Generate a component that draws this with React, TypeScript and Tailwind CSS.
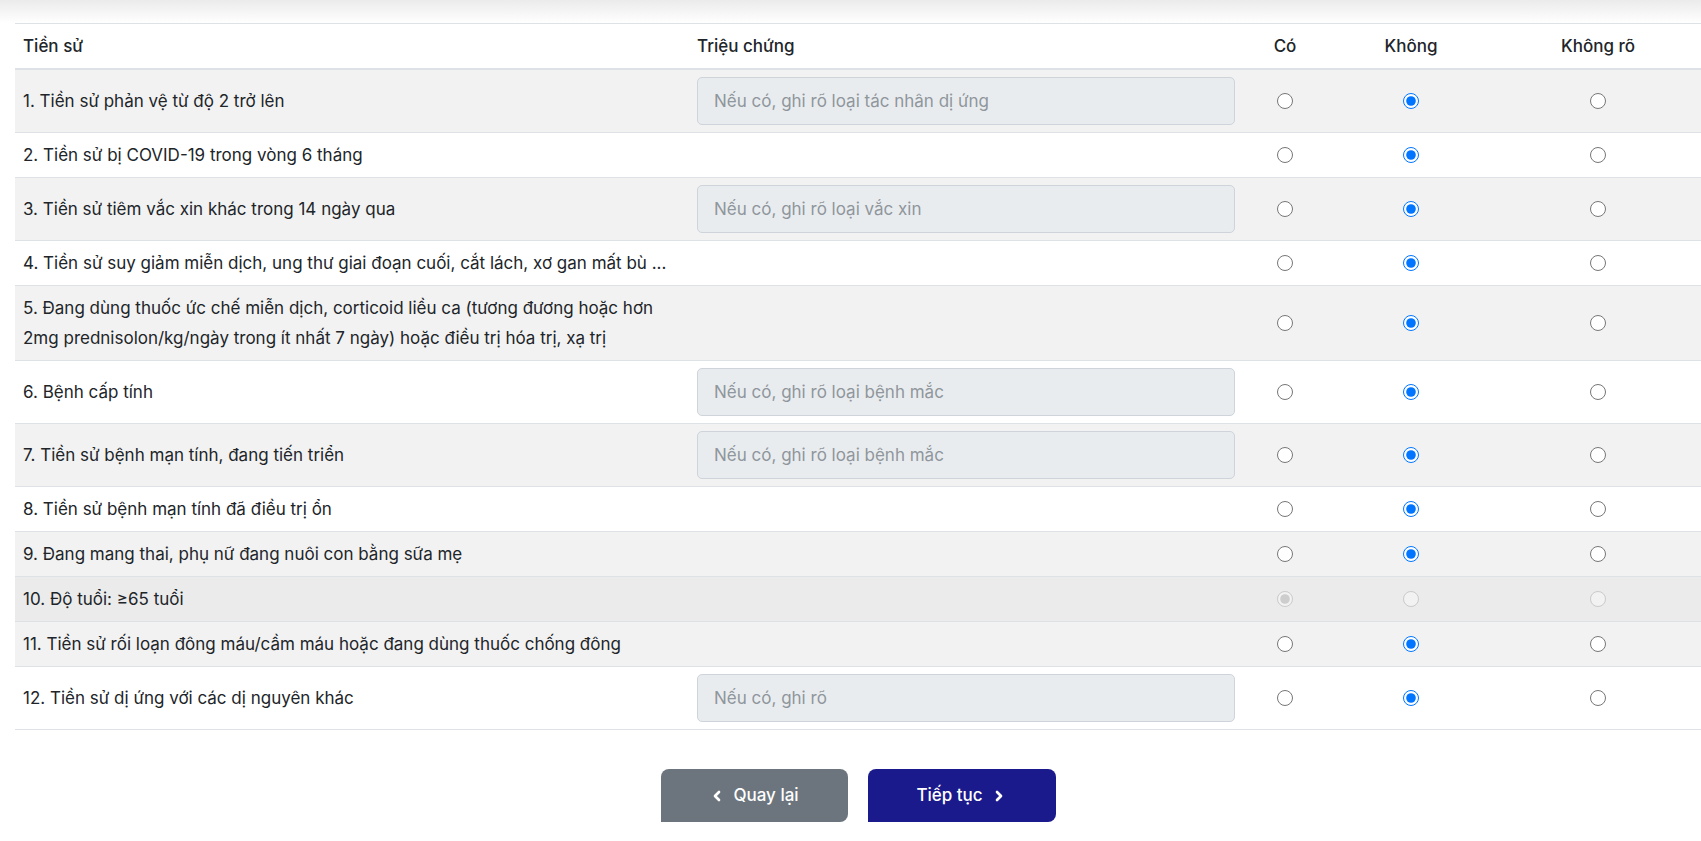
import { ChevronLeft, ChevronRight } from "lucide-react";

type Row = {
  label: string;
  placeholder?: string;
  answer: "co" | "khong" | "khongro";
  disabled?: boolean;
};

const rows: Row[] = [
  { label: "1. Tiền sử phản vệ từ độ 2 trở lên", placeholder: "Nếu có, ghi rõ loại tác nhân dị ứng", answer: "khong" },
  { label: "2. Tiền sử bị COVID-19 trong vòng 6 tháng", answer: "khong" },
  { label: "3. Tiền sử tiêm vắc xin khác trong 14 ngày qua", placeholder: "Nếu có, ghi rõ loại vắc xin", answer: "khong" },
  { label: "4. Tiền sử suy giảm miễn dịch, ung thư giai đoạn cuối, cắt lách, xơ gan mất bù ...", answer: "khong" },
  {
    label:
      "5. Đang dùng thuốc ức chế miễn dịch, corticoid liều ca (tương đương hoặc hơn 2mg prednisolon/kg/ngày trong ít nhất 7 ngày) hoặc điều trị hóa trị, xạ trị",
    answer: "khong",
  },
  { label: "6. Bệnh cấp tính", placeholder: "Nếu có, ghi rõ loại bệnh mắc", answer: "khong" },
  { label: "7. Tiền sử bệnh mạn tính, đang tiến triển", placeholder: "Nếu có, ghi rõ loại bệnh mắc", answer: "khong" },
  { label: "8. Tiền sử bệnh mạn tính đã điều trị ổn", answer: "khong" },
  { label: "9. Đang mang thai, phụ nữ đang nuôi con bằng sữa mẹ", answer: "khong" },
  { label: "10. Độ tuổi: ≥65 tuổi", answer: "co", disabled: true },
  { label: "11. Tiền sử rối loạn đông máu/cầm máu hoặc đang dùng thuốc chống đông", answer: "khong" },
  { label: "12. Tiền sử dị ứng với các dị nguyên khác", placeholder: "Nếu có, ghi rõ", answer: "khong" },
];

const grid = "grid grid-cols-[674px_554px_84px_168px_206px] items-center";

export default function App() {
  return (
    <div className="bg-white text-[#212529] font-['Inter','Noto_Sans',sans-serif] text-[17px]">
      <div className="h-[23px] bg-gradient-to-b from-[#ebebeb] to-white"></div>
      <div className="pl-[15px]">
        <div className="w-[1686px]">
          {/* Header */}
          <div className={`${grid} border-t border-b-2 border-[#dee2e6] font-medium`}>
            <div className="px-2 py-[7px] leading-[30px]">Tiền sử</div>
            <div className="px-2 py-[7px] leading-[30px]">Triệu chứng</div>
            <div className="px-2 py-[7px] leading-[30px] text-center">Có</div>
            <div className="px-2 py-[7px] leading-[30px] text-center">Không</div>
            <div className="px-2 py-[7px] leading-[30px] text-center">Không rõ</div>
          </div>

          {rows.map((row, i) => (
            <div
              key={i}
              className={`${grid} border-b border-[#dee2e6] ${
                row.disabled ? "bg-[#ebebeb]" : i % 2 === 0 ? "bg-[#f2f2f2]" : "bg-white"
              }`}
            >
              <div className="pl-2 py-[7px] leading-[30px]">{row.label}</div>
              <div className="px-2 py-[7px]">
                {row.placeholder && (
                  <input
                    type="text"
                    disabled
                    placeholder={row.placeholder}
                    className="w-full h-[48px] px-4 rounded-[5px] border border-[#ced4da] bg-[#e9ecef] text-[17px] placeholder:text-[#8f969c] outline-none"
                  />
                )}
              </div>
              {(["co", "khong", "khongro"] as const).map((opt) => (
                <div key={opt} className="flex justify-center">
                  <input
                    type="radio"
                    name={`q${i}`}
                    defaultChecked={row.answer === opt}
                    disabled={row.disabled}
                    className="w-[16px] h-[16px] m-0"
                  />
                </div>
              ))}
            </div>
          ))}

          {/* Buttons */}
          <div className="flex justify-center gap-5 mt-[39px]">
            <button className="flex items-center justify-center gap-2 w-[187px] h-[53px] bg-[#6c757d] text-white rounded-t-lg rounded-br-lg font-medium text-[17px]">
              <ChevronLeft size={16} strokeWidth={4} />
              Quay lại
            </button>
            <button className="flex items-center justify-center gap-2 w-[188px] h-[53px] bg-[#1a1a8c] text-white rounded-t-lg rounded-br-lg font-medium text-[17px]">
              Tiếp tục
              <ChevronRight size={16} strokeWidth={4} />
            </button>
          </div>
        </div>
      </div>
    </div>
  );
}
